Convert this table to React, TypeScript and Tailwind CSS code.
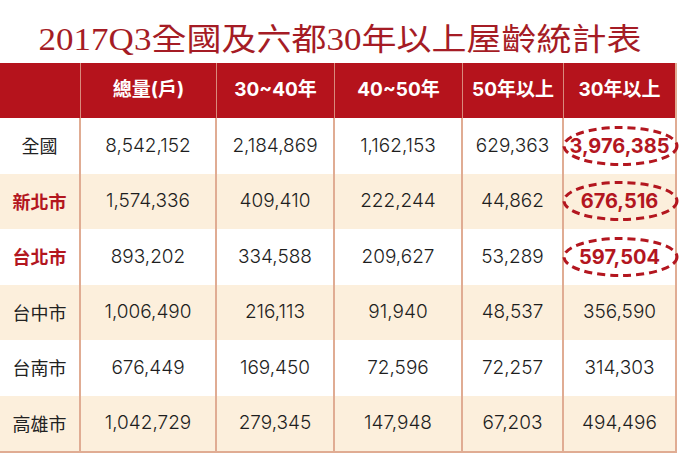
import React from "react";

type Row = {
  name: string;
  red: boolean;
  vals: string[];
  total: string;
  circled: boolean;
};

const rows: Row[] = [
  { name: "全國", red: false, vals: ["8,542,152", "2,184,869", "1,162,153", "629,363"], total: "3,976,385", circled: true },
  { name: "新北市", red: true, vals: ["1,574,336", "409,410", "222,244", "44,862"], total: "676,516", circled: true },
  { name: "台北市", red: true, vals: ["893,202", "334,588", "209,627", "53,289"], total: "597,504", circled: true },
  { name: "台中市", red: false, vals: ["1,006,490", "216,113", "91,940", "48,537"], total: "356,590", circled: false },
  { name: "台南市", red: false, vals: ["676,449", "169,450", "72,596", "72,257"], total: "314,303", circled: false },
  { name: "高雄市", red: false, vals: ["1,042,729", "279,345", "147,948", "67,203"], total: "494,496", circled: false },
];

const headers = ["總量(戶)", "30~40年", "40~50年", "50年以上", "30年以上"];

const gridCols = "grid grid-cols-[81px_136px_118px_128px_101px_113px]";

const numFont = { fontFamily: 'Inter, "Noto Sans CJK TC", sans-serif' };

function Ellipse() {
  return (
    <svg
      className="absolute left-[-2px] top-1/2 -translate-y-1/2 overflow-visible pointer-events-none"
      width="117"
      height="40"
      viewBox="0 0 117 40"
    >
      <ellipse
        cx="58.5"
        cy="20"
        rx="56.5"
        ry="18.5"
        fill="none"
        stroke="#b3161f"
        strokeWidth="3"
        strokeDasharray="8 5"
      />
    </svg>
  );
}

export default function App() {
  return (
    <div
      className="w-[680px] h-[463px] bg-white overflow-hidden"
      style={{ fontFamily: '"Noto Sans CJK TC", "Noto Sans", sans-serif' }}
    >
      <div className="h-[63px] flex items-end justify-center pb-[6px]">
        <h1
          className="text-[35px] leading-none text-[#a51c25] whitespace-nowrap scale-y-[0.88]"
          style={{ fontFamily: '"Liberation Serif", "Noto Sans CJK TC", serif' }}
        >
          2017Q3全國及六都30年以上屋齡統計表
        </h1>
      </div>

      <div className="w-[677px]">
        <div className={`${gridCols} h-[55px] bg-[#b5131c]`}>
          <div className="border-r border-[#d98a7c]" />
          {headers.map((h, i) => (
            <div
              key={h}
              className={`flex items-center justify-center text-white font-bold text-[19px] ${
                i < headers.length - 1 ? "border-r border-[#d98a7c]" : "border-r-2 border-[#e0ac93]"
              }`}
              style={numFont}
            >
              {h}
            </div>
          ))}
        </div>

        <div className="border-b-2 border-[#e0ac93]">
          {rows.map((r, ri) => (
            <div
              key={r.name}
              className={`${gridCols} h-[55.5px] ${ri % 2 === 1 ? "bg-[#fcefdc]" : "bg-white"}`}
            >
              <div
                className={`flex items-center justify-center text-[18px] border-r-2 border-[#e0ac93] ${
                  r.red ? "text-[#b3161f] font-bold" : "text-[#222] font-normal"
                }`}
              >
                {r.name}
              </div>
              {r.vals.map((v, vi) => (
                <div
                  key={vi}
                  className="flex items-center justify-center text-[19px] font-light text-[#1e1e1e] border-r-2 border-[#e0ac93]"
                  style={numFont}
                >
                  {v}
                </div>
              ))}
              <div
                className={`relative flex items-center justify-center border-r-2 border-[#e0ac93] ${
                  r.circled ? "text-[#b3161f] font-bold text-[20px]" : "text-[#1e1e1e] font-light text-[19px]"
                }`}
                style={numFont}
              >
                {r.circled && <Ellipse />}
                <span className="relative">{r.total}</span>
              </div>
            </div>
          ))}
        </div>
      </div>
    </div>
  );
}
